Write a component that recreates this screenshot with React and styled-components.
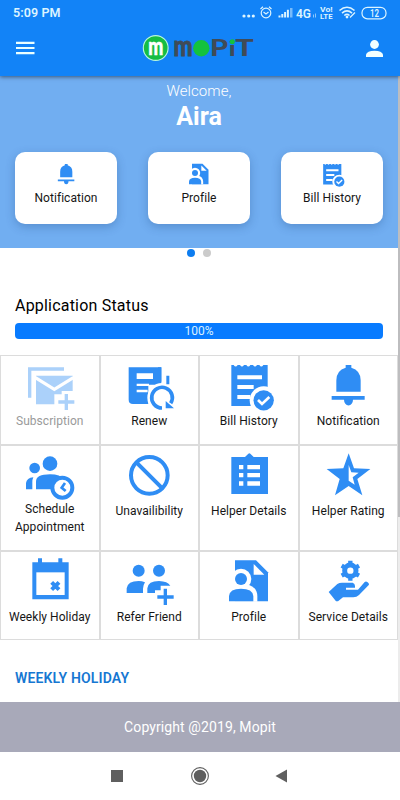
import React from "react";
import styled, { createGlobalStyle } from "styled-components";

const GlobalStyle = createGlobalStyle`
  * {
    box-sizing: border-box;
  }
  body {
    margin: 0;
    background: #fff;
    font-family: Roboto, "Liberation Sans", sans-serif;
    color: #111;
  }
  svg {
    display: block;
    overflow: visible;
  }
`;

const Screen = styled.div`
  width: 400px;
  height: 800px;
  display: flex;
  flex-direction: column;
  overflow: hidden;
`;

const TopBar = styled.header`
  height: 76px;
  background: #1283f7;
  position: relative;
  box-shadow: 0 1px 4px rgba(0, 0, 0, 0.5);
`;

const StatusBar = styled.div`
  height: 25px;
  padding: 0 13px;
  display: flex;
  align-items: center;
  justify-content: space-between;
  color: #dcf4ff;
`;

const Time = styled.span`
  font-size: 12.5px;
  font-weight: 600;
  letter-spacing: 0.1px;
`;

const NavBar = styled.div`
  height: 46px;
  padding: 0 17px 0 16px;
  display: flex;
  align-items: center;
`;

const LogoLink = styled.div`
  margin: 0 auto 0 107px;
`;

const Body = styled.main`
  height: 626px;
  display: flex;
`;

const Content = styled.div`
  width: 398px;
`;

const ScrollTrack = styled.div`
  width: 2px;
  background: #ececec;
`;

const ScrollThumb = styled.div`
  height: 441px;
  background: #bdbdbf;
`;

const Hero = styled.section`
  height: 172px;
  padding-top: 5px;
  background: #71aef1;
  color: #fff;
  text-align: center;
`;

const Welcome = styled.div`
  font-size: 15px;
  font-weight: 300;
  line-height: 21px;
  letter-spacing: 0.1px;
`;

const UserName = styled.h1`
  margin: 0;
  font-size: 25px;
  font-weight: 700;
  line-height: 30px;
`;

const CardRow = styled.div`
  display: flex;
  justify-content: space-between;
  padding: 20px 15px 0;
`;

const Card = styled.div`
  width: 102px;
  height: 72px;
  padding-top: 11px;
  border-radius: 10px;
  background: #fff;
  box-shadow: 0 3px 10px rgba(30, 70, 130, 0.3);
  display: flex;
  flex-direction: column;
  align-items: center;
`;

const Label = styled.span`
  font-size: 12px;
  line-height: 18px;
  letter-spacing: 0.05px;
  text-align: center;
  color: ${p => (p.$muted ? "#9a9a9a" : "#161616")};
`;

const Dots = styled.div`
  height: 10px;
  display: flex;
  justify-content: center;
  align-items: center;
  gap: 8px;
`;

const Dot = styled.span`
  width: 8px;
  height: 8px;
  border-radius: 50%;
  background: ${p => (p.$active ? "#0d7df0" : "#cbcbcb")};
`;

const Status = styled.section`
  padding: 37px 15px 0;
  height: 97px;
`;

const StatusTitle = styled.h2`
  margin: 0 0 7px;
  font-size: 16px;
  font-weight: 400;
  line-height: 21px;
  letter-spacing: 0.2px;
  color: #000;
`;

const Progress = styled.div`
  height: 16px;
  border-radius: 4px;
  background: #087bff;
  color: #d9f1ff;
  font-size: 12px;
  line-height: 16px;
  text-align: center;
`;

const Grid = styled.section`
  display: grid;
  grid-template-columns: repeat(4, 1fr);
  grid-template-rows: 90px 106px 89px;
`;

const Cell = styled.div`
  padding-top: 7px;
  border: 1px solid #dcdcdc;
  display: flex;
  flex-direction: column;
  align-items: center;
`;

const IconBox = styled.div`
  color: #2f8df4;
  opacity: ${p => (p.$muted ? 0.4 : 1)};
  margin-bottom: ${p => p.$gap || "1px"};
`;

const SectionTitle = styled.h3`
  margin: 0;
  padding: 28px 15px 0;
  font-size: 14px;
  font-weight: 600;
  line-height: 20px;
  letter-spacing: 0.15px;
  color: #1677d2;
`;

const Footer = styled.footer`
  height: 50px;
  background: #a8a9b9;
  color: #fff;
  font-size: 14px;
  line-height: 50px;
  letter-spacing: 0.1px;
  text-align: center;
`;

const AndroidNav = styled.nav`
  height: 48px;
  padding-top: 15px;
  display: flex;
  justify-content: center;
`;

const Icon = ({ size = 48, children }) => (
  <svg width={size} height={size} viewBox="0 0 144 144" fill="currentColor">
    {children}
  </svg>
);

const line = { fill: "none", stroke: "currentColor" };

const icons = {
  subscription: (
    <>
      <path d="M6 13H114V23H16V104H6Z" />
      <path d="M30 38H140V84H107V94H85V124H30Z" />
      <path d="M28 44L85 79L142 44" {...line} stroke="#fff" strokeWidth="10" />
      <path d="M121 93V141M97 117H145" {...line} strokeWidth="10" />
    </>
  ),
  renew: (
    <>
      <path d="M11 13H109V65H70V123H24Q11 123 11 110Z" />
      <path d="M35 31H84V48H35ZM35 62H72V69H35ZM35 80H68V88H35Z" fill="#fff" />
      <circle cx="111" cy="104" r="44" fill="#fff" />
      <path d="M99 13H109V56H99ZM124 38H133V64H124Z" />
      <path d="M111 135A31 31 0 1 1 137 121" {...line} strokeWidth="11" />
      <path d="M122 114L147 136H122Z" />
    </>
  ),
  bill: (
    <>
      <path d="M19 6L26 6Q32 15 38 6H45Q51 15 57 6H64Q70 15 76 6H84Q90 15 96 6H103Q109 15 115 6H128V129H19Z" />
      <path d="M37 37H111V49H37ZM37 66H86V78H37ZM37 96H76V108H37Z" fill="#fff" />
      <circle cx="116" cy="112" r="42" fill="#fff" />
      <circle cx="116" cy="112" r="30.5" />
      <path d="M99 111L111 123L133 102" {...line} stroke="#fff" strokeWidth="8" />
    </>
  ),
  bell: (
    <>
      <path d="M65 6H82V14Q110 22 110 52V86H37V52Q37 22 65 14Z" />
      <path d="M23 99H122V110H87A13 17 0 0 1 60 110H23Z" />
    </>
  ),
  schedule: (
    <>
      <circle cx="72" cy="32" r="22" />
      <circle cx="26" cy="45" r="16" />
      <path d="M0 109V90Q2 75 22 73Q19 79 19 88V109Z" />
      <path d="M30 109V86Q30 64 72 64Q104 64 113 80V109Z" />
      <circle cx="109" cy="104" r="30" fill="#fff" stroke="currentColor" strokeWidth="12" />
      <path d="M117 90L107 104L119 114" {...line} strokeWidth="8" />
    </>
  ),
  block: (
    <>
      <circle cx="73" cy="67" r="55" {...line} strokeWidth="12" />
      <path d="M34 28L112 106" {...line} strokeWidth="12" />
    </>
  ),
  details: (
    <>
      <path d="M19 12H60L70 2Q73 0 76 2L86 12H129V123H19Z" />
      <path
        d="M42 36H55V49H42ZM42 60H55V73H42ZM42 85H55V98H42ZM67 36H105V49H67ZM67 60H105V73H67ZM67 85H105V98H67Z"
        fill="#fff"
      />
    </>
  ),
  star: (
    <>
      <path d="M74 1L90 46L139 48L100 78L115 127L74 99L33 127L47 78L8 48L58 46Z" />
      <path d="M74 36L82 58L104 59L86 73L92 95L74 83Z" fill="#fff" />
    </>
  ),
  calendar: (
    <>
      <path d="M19 10H36V-2H48V10H97V-2H109V10H128V121H19Z" />
      <path d="M31 40H116V108H31Z" fill="#fff" />
      <path d="M77 70L99 92M99 70L77 92" {...line} strokeWidth="12" />
    </>
  ),
  refer: (
    <>
      <circle cx="41" cy="35" r="18" />
      <circle cx="102" cy="35" r="18" />
      <path d="M5 102V88Q8 66 41 66Q51 66 60 70Q54 79 54 89V102Z" />
      <path d="M67 102V88Q69 66 102 66Q128 67 136 80H107V94H90V102Z" />
      <path d="M121 89V138M97 114H146" {...line} strokeWidth="10" />
    </>
  ),
  profile: (
    <>
      <path d="M30 4H93L129 40V127H30Z" />
      <path d="M86 15L118 47H86Z" fill="#fff" />
      <circle cx="48" cy="60" r="31" fill="#fff" />
      <path d="M12 75H62Q97 82 97 112V128H12Z" fill="#fff" />
      <circle cx="48" cy="60" r="18" />
      <path d="M12 127V111Q14 89 48 89Q83 89 85 111V127Z" />
    </>
  ),
  service: (
    <>
      <circle cx="79" cy="35" r="17" {...line} strokeWidth="15" />
      <path
        d="M79 15V5M79 55V65M62 25L53 20M96 25L105 20M62 45L53 50M96 45L105 50"
        {...line}
        strokeWidth="13"
      />
      <path d="M14 99L40 75Q46 71 54 71H86Q93 73 93 81V86H66V92H102L122 69Q128 65 134 73L135 77L105 108Q98 115 88 115H57L42 127H36Z" />
    </>
  )
};

const shortcuts = [
  { icon: "bell", label: "Notification" },
  { icon: "profile", label: "Profile" },
  { icon: "bill", label: "Bill History" }
];

const tiles = [
  { icon: "subscription", label: "Subscription", muted: true },
  { icon: "renew", label: "Renew" },
  { icon: "bill", label: "Bill History" },
  { icon: "bell", label: "Notification" },
  { icon: "schedule", label: "Schedule Appointment", gap: "-1px" },
  { icon: "block", label: "Unavailibility" },
  { icon: "details", label: "Helper Details" },
  { icon: "star", label: "Helper Rating" },
  { icon: "calendar", label: "Weekly Holiday" },
  { icon: "refer", label: "Refer Friend" },
  { icon: "profile", label: "Profile" },
  { icon: "service", label: "Service Details" }
];

const StatusIcons = () => (
  <svg width="145" height="16" viewBox="242 4.5 145 16" fill="currentColor">
    <circle cx="244" cy="15.5" r="1.6" />
    <circle cx="248.7" cy="15.5" r="1.6" />
    <circle cx="253.3" cy="15.5" r="1.6" />
    <g fill="none" stroke="currentColor" strokeWidth="1.2">
      <circle cx="266" cy="12.5" r="4.8" />
      <path d="M263.5 11.5L266 13.5L268.5 11.5M260.5 8.5L263 6.3M271.5 8.5L269 6.3" />
      <path d="M339.5 10Q347 3.5 354.5 10M342 12.6Q347 8.3 352 12.6M344.3 15Q347 12.8 349.5 15" strokeWidth="1.6" />
      <path d="M350 17L355 12" />
      <rect x="362" y="6.8" width="24" height="11.6" rx="5.5" />
    </g>
    <circle cx="347" cy="16.6" r="1.4" />
    <path d="M278.5 17V15H280.5V17ZM281.3 17V13.5H283.3V17ZM284.1 17V11.5H286.1V17ZM286.9 17V9.3H288.9V17Z" />
    <path d="M290 17V7.5H292.5V17Z" opacity="0.5" />
    <path d="M313 17V14H314V17ZM315 17V13H316V17Z" opacity="0.6" />
    <text x="296" y="17" fontSize="12" fontWeight="600" textLength="15" lengthAdjust="spacingAndGlyphs">4G</text>
    <text x="320" y="11.2" fontSize="6.5" fontWeight="700" textLength="12.5" lengthAdjust="spacingAndGlyphs">Vo!</text>
    <text x="320" y="18.8" fontSize="6.5" fontWeight="700" textLength="12.5" lengthAdjust="spacingAndGlyphs">LTE</text>
    <text x="370" y="16.2" fontSize="10" fontWeight="600" textLength="9" lengthAdjust="spacingAndGlyphs">12</text>
  </svg>
);

const MenuIcon = () => (
  <svg width="19" height="14" viewBox="0 0 19 14" stroke="#eaffff" strokeWidth="2.2">
    <path d="M0 1.8H18.5M0 7H18.5M0 12.2H18.5" />
  </svg>
);

const Logo = () => (
  <svg width="112" height="28" viewBox="142 34 112 28" fontFamily="Lato, sans-serif" fontWeight="900" fill="#404b57">
    <circle cx="155.7" cy="48" r="12.4" fill="#16bd43" stroke="#b9f6e0" strokeWidth="1.1" />
    <text x="148.3" y="54.5" fontSize="24" fill="#fff" stroke="#fff" strokeWidth="0.6" textLength="15" lengthAdjust="spacingAndGlyphs">m</text>
    <text x="173.5" y="56" fontSize="28" stroke="#404b57" strokeWidth="0.9" textLength="19" lengthAdjust="spacingAndGlyphs">m</text>
    <circle cx="201.3" cy="48.3" r="8.2" fill="#14c23d" />
    <text x="210" y="56" fontSize="22" textLength="18" lengthAdjust="spacingAndGlyphs">P</text>
    <text x="228.7" y="56" fontSize="21" textLength="7" lengthAdjust="spacingAndGlyphs">i</text>
    <circle cx="232.3" cy="41.8" r="2.5" fill="#14c23d" />
    <text x="235.3" y="56" fontSize="22" textLength="18.5" lengthAdjust="spacingAndGlyphs">T</text>
  </svg>
);

const UserIcon = () => (
  <svg width="17" height="17" viewBox="0 0 17 17" fill="#f2ffff">
    <circle cx="8.5" cy="4.5" r="4.4" />
    <path d="M0 17V14.5Q1 10.7 8.5 10.7Q16 10.7 17 14.5V17Z" />
  </svg>
);

const NavButtons = () => (
  <svg width="178" height="18" viewBox="111 767 178 18" fill="#5f5f5f">
    <rect x="111" y="770" width="12" height="12" />
    <circle cx="200" cy="776" r="8.4" fill="none" stroke="#5f5f5f" strokeWidth="1.1" />
    <circle cx="200" cy="776" r="6.2" />
    <path d="M275.5 776L287 769.5V782.5Z" />
  </svg>
);

function App() {
  return (
    <Screen>
      <GlobalStyle />
      <TopBar>
        <StatusBar>
          <Time>5:09 PM</Time>
          <StatusIcons />
        </StatusBar>
        <NavBar>
          <MenuIcon />
          <LogoLink>
            <Logo />
          </LogoLink>
          <UserIcon />
        </NavBar>
      </TopBar>
      <Body>
        <Content>
          <Hero>
            <Welcome>Welcome,</Welcome>
            <UserName>Aira</UserName>
            <CardRow>
              {shortcuts.map(item => (
                <Card key={item.icon}>
                  <IconBox $gap="2px">
                    <Icon size={24}>{icons[item.icon]}</Icon>
                  </IconBox>
                  <Label>{item.label}</Label>
                </Card>
              ))}
            </CardRow>
          </Hero>
          <Dots>
            <Dot $active />
            <Dot />
          </Dots>
          <Status>
            <StatusTitle>Application Status</StatusTitle>
            <Progress>100%</Progress>
          </Status>
          <Grid>
            {tiles.map(tile => (
              <Cell key={tile.label}>
                <IconBox $muted={tile.muted} $gap={tile.gap}>
                  <Icon>{icons[tile.icon]}</Icon>
                </IconBox>
                <Label $muted={tile.muted}>{tile.label}</Label>
              </Cell>
            ))}
          </Grid>
          <SectionTitle>WEEKLY HOLIDAY</SectionTitle>
        </Content>
        <ScrollTrack>
          <ScrollThumb />
        </ScrollTrack>
      </Body>
      <Footer>Copyright @2019, Mopit</Footer>
      <AndroidNav>
        <NavButtons />
      </AndroidNav>
    </Screen>
  );
}

export default App;
